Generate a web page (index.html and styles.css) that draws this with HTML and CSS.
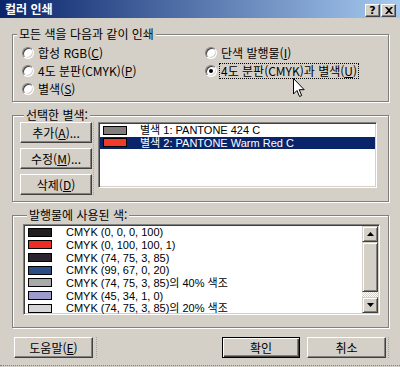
FILE: index.html
```html
<!DOCTYPE html>
<html lang="ko">
<head>
<meta charset="UTF-8">
<meta name="viewport" content="width=device-width, initial-scale=1.0">
<title>컬러 인쇄</title>
<link rel="stylesheet" href="styles.css">
</head>
<body>
<div class="window">
    <div class="titlebar">
        <span class="title">컬러 인쇄</span>
        <div class="caption-buttons">
            <span class="cap-btn">?</span>
            <span class="cap-btn">
                <svg width="8" height="7" viewBox="0 0 8 7"><path d="M0 0h2l2 2 2-2h2L5 3.5 8 7H6L4 5 2 7H0l3-3.5z" fill="#000"/></svg>
            </span>
        </div>
    </div>

    <div class="content">
        <div class="group group-print">
            <div class="group-title">모든 색을 다음과 같이 인쇄</div>
            <div class="radio-grid">
                <div class="option"><span class="radio"></span><span>합성 RGB(<u>C</u>)</span></div>
                <div class="option"><span class="radio"></span><span>단색 발행물(<u>I</u>)</span></div>
                <div class="option"><span class="radio"></span><span>4도 분판(CMYK)(<u>P</u>)</span></div>
                <div class="option"><span class="radio checked"></span><span class="focus">4도 분판(CMYK)과 별색(<u>U</u>)</span></div>
                <div class="option"><span class="radio"></span><span>별색(<u>S</u>)</span></div>
            </div>
        </div>

        <div class="group group-spot">
            <div class="group-title">선택한 별색:</div>
            <div class="spot-body">
                <div class="button-col">
                    <button class="btn btn-small">추가(<u>A</u>)...</button>
                    <button class="btn btn-small">수정(<u>M</u>)...</button>
                    <button class="btn btn-small">삭제(<u>D</u>)</button>
                </div>
                <div class="listbox spot-list">
                    <div class="row"><span class="swatch" style="background:#827e7b"></span><span class="row-text">별색 1: PANTONE 424 C</span></div>
                    <div class="row selected"><span class="swatch" style="background:#f03c2a"></span><span class="row-text">별색 2: PANTONE Warm Red C</span></div>
                </div>
            </div>
        </div>

        <div class="group group-used">
            <div class="group-title">발행물에 사용된 색:</div>
            <div class="listbox used-list">
                <div class="used-rows">
                    <div class="row"><span class="swatch" style="background:#231f20"></span><span class="row-text">CMYK (0, 0, 0, 100)</span></div>
                    <div class="row"><span class="swatch" style="background:#ee2c26"></span><span class="row-text">CMYK (0, 100, 100, 1)</span></div>
                    <div class="row"><span class="swatch" style="background:#2b2330"></span><span class="row-text">CMYK (74, 75, 3, 85)</span></div>
                    <div class="row"><span class="swatch" style="background:#2b4d86"></span><span class="row-text">CMYK (99, 67, 0, 20)</span></div>
                    <div class="row"><span class="swatch" style="background:#a9a8aa"></span><span class="row-text">CMYK (74, 75, 3, 85)의 40% 색조</span></div>
                    <div class="row"><span class="swatch" style="background:#9c9bcc"></span><span class="row-text">CMYK (45, 34, 1, 0)</span></div>
                    <div class="row"><span class="swatch" style="background:#d5d4d7"></span><span class="row-text">CMYK (74, 75, 3, 85)의 20% 색조</span></div>
                </div>
                <div class="scrollbar">
                    <span class="scroll-btn">
                        <svg width="7" height="4" viewBox="0 0 7 4"><path d="M3.5 0L7 4H0z" fill="#000"/></svg>
                    </span>
                    <span class="scroll-thumb"></span>
                    <span class="scroll-track"></span>
                    <span class="scroll-btn">
                        <svg width="7" height="4" viewBox="0 0 7 4"><path d="M0 0h7L3.5 4z" fill="#000"/></svg>
                    </span>
                </div>
            </div>
        </div>

        <div class="footer">
            <div class="dotted-wrap help-wrap">
                <button class="btn btn-wide">도움말(<u>E</u>)</button>
            </div>
            <button class="btn btn-wide btn-default">확인</button>
            <div class="dotted-wrap cancel-wrap">
                <button class="btn btn-wide">취소</button>
            </div>
        </div>
    </div>

    <div class="frame-bottom"></div>

    <svg class="cursor" width="12" height="20" viewBox="0 0 12 20">
        <path d="M0.5 0.5v15.5l3.5-3.5 2.5 6 2.2-1-2.5-5.8h5z" fill="#fff" stroke="#000" stroke-width="1"/>
    </svg>
</div>
</body>
</html>
```

FILE: styles.css
```css
body {
    margin: 0;
    background-color: #d4d0c8;
    font-family: "Noto Sans CJK KR", "Noto Sans", sans-serif;
    font-size: 12px;
    color: #000;
}
.window {
    position: relative;
    width: 400px;
    height: 367px;
    overflow: hidden;
}
u {
    text-decoration-thickness: 1px;
    text-underline-offset: 1px;
}

/* title bar */
.titlebar {
    height: 18px;
    display: flex;
    justify-content: space-between;
    padding: 0 4px 0 5px;
    background: linear-gradient(to right, #0a246a, #a6caf0);
}
.title {
    color: #fff;
    font-weight: bold;
    line-height: 18px;
}
.caption-buttons {
    display: flex;
    gap: 1px;
    margin-top: 4px;
}
.cap-btn {
    width: 15px;
    height: 13px;
    box-sizing: border-box;
    display: flex;
    align-items: center;
    justify-content: center;
    background-color: #d4d0c8;
    border: 1px solid;
    border-color: #fff #404040 #404040 #fff;
    box-shadow: inset -1px -1px #808080;
    font: bold 11px "DejaVu Sans", sans-serif;
    line-height: 11px;
}

/* content */
.content {
    padding: 16px 11px 0 12px;
}
.group {
    box-sizing: border-box;
    width: 377px;
    border: 1px solid #808080;
    box-shadow: inset 1px 1px #fff, 1px 1px #fff;
}
.group-title {
    width: fit-content;
    margin: -8px 0 0 4px;
    padding: 0 2px;
    line-height: 14px;
    background-color: #d4d0c8;
}
.group-print {
    height: 68px;
    padding-left: 9px;
}
.group-print .group-title {
    margin-left: -5px;
}
.radio-grid {
    display: grid;
    grid-template-columns: 183px auto;
    grid-auto-rows: 18px;
    margin-top: 3px;
}
.option {
    display: flex;
    align-items: center;
    gap: 4px;
    line-height: 14px;
}
.radio {
    position: relative;
    width: 12px;
    height: 12px;
    box-sizing: border-box;
    border-radius: 50%;
    background-color: #fff;
    border: 1px solid;
    border-color: #808080 #fff #fff #808080;
    box-shadow: inset 1px 1px #404040, inset -1px -1px #d4d0c8;
}
.radio.checked::after {
    content: "";
    position: absolute;
    left: 3px;
    top: 3px;
    width: 4px;
    height: 4px;
    border-radius: 50%;
    background-color: #000;
}
.focus {
    margin-left: -2px;
    padding: 0 1px;
    border: 1px dotted #000;
}

/* buttons */
.btn {
    box-sizing: border-box;
    height: 21px;
    padding: 0;
    font-family: inherit;
    font-size: 12px;
    color: #000;
    background-color: #d4d0c8;
    border: 1px solid;
    border-color: #fff #404040 #404040 #fff;
    box-shadow: inset -1px -1px #808080;
}
.btn-small {
    width: 72px;
}
.btn-wide {
    width: 79px;
}
.btn-default {
    border: 1px solid #000;
    box-shadow: inset 1px 1px #fff, inset -1px -1px #404040, inset -2px -2px #808080;
}

/* selected spot colours */
.group-spot {
    height: 87px;
    margin-top: 13px;
    padding: 0 11px 0 7px;
}
.spot-body {
    display: flex;
}
.button-col {
    display: flex;
    flex-direction: column;
    gap: 5px;
    padding-right: 1px;
    margin-right: 4px;
    border-right: 1px dotted #a8a8a8;
}
.listbox {
    box-sizing: border-box;
    background-color: #fff;
    border: 1px solid;
    border-color: #808080 #fff #fff #808080;
    box-shadow: inset 1px 1px #404040, inset -1px -1px #d4d0c8;
    padding: 1px;
}
.spot-list {
    width: 279px;
    height: 66px;
}
.row {
    display: flex;
    align-items: center;
    height: 12.67px;
    line-height: 12px;
    font-family: "Liberation Sans", "Noto Sans CJK KR", sans-serif;
    font-size: 11px;
    white-space: nowrap;
}
.row.selected {
    background-color: #0a246a;
    color: #fff;
}
.swatch {
    box-sizing: border-box;
    flex: none;
    width: 24px;
    height: 9px;
    margin-left: 3px;
    border: 1px solid #000;
}
.row-text {
    margin-left: 13px;
}

/* colours used */
.group-used {
    height: 113px;
    margin-top: 13px;
    padding-left: 10px;
}
.used-list {
    display: flex;
    width: 357px;
    height: 91px;
    margin-top: 2px;
}
.used-rows {
    flex: 1;
}
.used-rows .row-text {
    margin-left: 14px;
}
.scrollbar {
    display: flex;
    flex-direction: column;
    width: 16px;
}
.scroll-btn,
.scroll-thumb {
    box-sizing: border-box;
    background-color: #d4d0c8;
    border: 1px solid;
    border-color: #d4d0c8 #404040 #404040 #d4d0c8;
    box-shadow: inset 1px 1px #fff, inset -1px -1px #808080;
}
.scroll-btn {
    height: 16px;
    display: flex;
    align-items: center;
    justify-content: center;
}
.scroll-thumb {
    height: 50px;
}
.scroll-track {
    flex: 1;
    background: repeating-conic-gradient(#fff 0 25%, #d4d0c8 0 50%) 0 0 / 2px 2px;
}

/* footer */
.footer {
    display: flex;
    margin-top: 9px;
    padding-left: 2px;
}
.dotted-wrap {
    display: flex;
    border-right: 1px dotted #a8a8a8;
}
.help-wrap {
    padding-right: 3px;
    margin-right: 125px;
}
.cancel-wrap {
    margin-left: 7px;
    padding-right: 2px;
}
.frame-bottom {
    margin-top: 7px;
    border-top: 1px dotted #808080;
}

.cursor {
    position: absolute;
    left: 293px;
    top: 78px;
}
```
